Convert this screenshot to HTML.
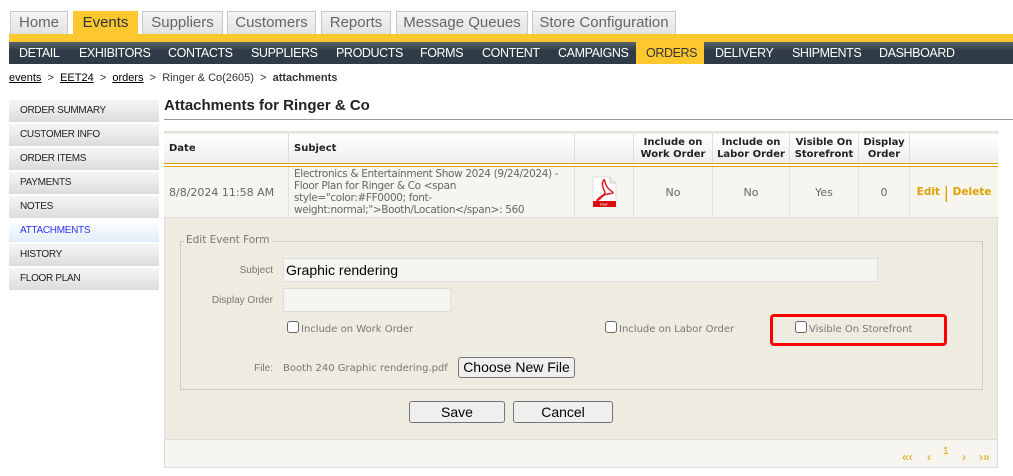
<!DOCTYPE html>
<html><head><meta charset="utf-8"><style>
*{box-sizing:border-box;margin:0;padding:0}
body{width:1013px;height:476px;overflow:hidden;background:#fff;font-family:"Liberation Sans",Arial,sans-serif;position:relative}
.abs{position:absolute}
.tab{position:absolute;top:11px;height:24px;border:1px solid #c8c8c8;border-bottom:none;background:linear-gradient(#f4f4f4,#e2e2e2);color:#666;font-size:15px;text-align:center;line-height:22px}
.tab.on{background:#fdc82f;color:#333;border-color:#fdc82f}
.ybar{left:9px;top:34px;width:1004px;height:8px;background:#fdc82f}
.nav{left:9px;top:42px;width:1004px;height:22px;background:linear-gradient(#5a636b,#2f3c47 40%,#2f3c47)}
.ni{position:absolute;top:42px;height:22px;line-height:22px;color:#fff;font-size:12.5px;letter-spacing:-0.4px;white-space:nowrap}
.nion{position:absolute;top:42px;left:636px;width:68px;height:22px;background:#fdc82f}
.bc{left:9px;top:72px;font-size:11px;color:#333}
.bc a{color:#000;text-decoration:underline}
.side{position:absolute;left:9px;width:150px;height:22px;background:linear-gradient(#f6f6f6,#dcdcdc);font-size:10px;letter-spacing:-0.3px;color:#222;line-height:22px;padding-left:11px}
.side.on{background:linear-gradient(#fff,#e0eefb);color:#33f}
.v{font-family:"DejaVu Sans",Verdana,sans-serif}
.hd{position:absolute;top:134px;height:29px;background:linear-gradient(#fff,#eee);border-right:1px solid #ddd;font-family:"DejaVu Sans",Verdana,sans-serif;font-size:10px;font-weight:bold;color:#222;text-align:center;line-height:12px;display:flex;align-items:center;justify-content:center}
.rc{position:absolute;top:167px;height:50px;background:#f6f5f0;border-right:1px solid #e2e2e2;font-family:"DejaVu Sans",Verdana,sans-serif;font-size:11px;color:#666;display:flex;align-items:center;justify-content:center}
.lbl{position:absolute;font-size:10px;color:#777;text-align:right}
.cb{display:inline-block;width:12px;height:12px;border:1px solid #666;border-radius:3px;background:#fff;vertical-align:-1px;margin-right:2px}
.btn{position:absolute;border:1px solid #767676;border-radius:3px;background:#efefef;font-size:14px;color:#000;text-align:center}
</style></head><body>
<div class="tab" style="left:10px;width:58px">Home</div>
<div class="tab on" style="left:73px;width:65px">Events</div>
<div class="tab" style="left:142px;width:81px">Suppliers</div>
<div class="tab" style="left:227px;width:89px">Customers</div>
<div class="tab" style="left:321px;width:70px">Reports</div>
<div class="tab" style="left:396px;width:132px">Message Queues</div>
<div class="tab" style="left:532px;width:144px">Store Configuration</div>
<div class="abs ybar"></div>
<div class="abs nav"></div>
<div class="nion"></div>
<div class="ni" style="left:19px">DETAIL</div>
<div class="ni" style="left:79px">EXHIBITORS</div>
<div class="ni" style="left:168px">CONTACTS</div>
<div class="ni" style="left:251px">SUPPLIERS</div>
<div class="ni" style="left:336px">PRODUCTS</div>
<div class="ni" style="left:420px">FORMS</div>
<div class="ni" style="left:482px">CONTENT</div>
<div class="ni" style="left:558px">CAMPAIGNS</div>
<div class="ni" style="left:646px;color:#333">ORDERS</div>
<div class="ni" style="left:715px">DELIVERY</div>
<div class="ni" style="left:792px">SHIPMENTS</div>
<div class="ni" style="left:879px">DASHBOARD</div>
<div class="abs bc"><a>events</a> &nbsp;&gt;&nbsp; <a>EET24</a> &nbsp;&gt;&nbsp; <a>orders</a> &nbsp;&gt;&nbsp; Ringer &amp; Co(2605) &nbsp;&gt;&nbsp; <b>attachments</b></div>
<div class="side" style="top:100px">ORDER SUMMARY</div>
<div class="side" style="top:124px">CUSTOMER INFO</div>
<div class="side" style="top:148px">ORDER ITEMS</div>
<div class="side" style="top:172px">PAYMENTS</div>
<div class="side" style="top:196px">NOTES</div>
<div class="side on" style="top:220px">ATTACHMENTS</div>
<div class="side" style="top:244px">HISTORY</div>
<div class="side" style="top:268px">FLOOR PLAN</div>
<div class="abs" style="left:164px;top:97px;font-size:15px;font-weight:bold;color:#222">Attachments for Ringer &amp; Co</div>
<div class="abs" style="left:164px;top:119px;width:849px;height:1px;background:#999"></div>
<div class="abs" style="left:164px;top:131px;width:834px;height:337px;background:#eeebe1;border:1px solid #ddd"></div>
<div class="hd" style="left:164px;width:125px;justify-content:flex-start;padding-left:5px">Date</div>
<div class="hd" style="left:289px;width:286px;justify-content:flex-start;padding-left:5px">Subject</div>
<div class="hd" style="left:575px;width:59px"></div>
<div class="hd" style="left:634px;width:79px">Include on<br>Work Order</div>
<div class="hd" style="left:713px;width:77px">Include on<br>Labor Order</div>
<div class="hd" style="left:790px;width:69px">Visible On<br>Storefront</div>
<div class="hd" style="left:859px;width:51px">Display<br>Order</div>
<div class="hd" style="left:910px;width:88px;border:none"></div>
<div class="abs" style="left:164px;top:163px;width:834px;height:4px;border-top:1px solid #e0a000;border-bottom:1px solid #e0a000;background:#fff"></div>
<div class="rc" style="left:164px;width:125px;justify-content:flex-start;padding-left:5px">8/8/2024 11:58 AM</div>
<div class="rc" style="left:289px;width:286px;justify-content:flex-start;padding-left:5px;line-height:12px;font-size:10.5px;letter-spacing:-0.35px;white-space:nowrap;overflow:hidden">Electronics &amp; Entertainment Show 2024 (9/24/2024) -<br>Floor Plan for Ringer &amp; Co &lt;span<br>style="color:#FF0000; font-<br>weight:normal;"&gt;Booth/Location&lt;/span&gt;: 560</div>
<div class="rc" style="left:575px;width:59px"><svg width="25" height="32" viewBox="0 0 25 32"><path d="M1 1h17l6 6v20H1z" fill="#fff" stroke="#ddd"/><path d="M18 1v6h6" fill="#eee" stroke="#ccc"/><path d="M11 5c-2 4 1 9 2 11s-7 6-8 8 3-1 6-4 9-2 10-3-5-3-7-8-1-7-3-4z" fill="none" stroke="#e02020" stroke-width="1.5"/><rect x="1" y="25" width="23" height="6" fill="#d81010"/><text x="8" y="30" font-size="4" fill="#fff" font-family="Liberation Sans">PDF</text></svg></div>
<div class="rc" style="left:634px;width:79px">No</div>
<div class="rc" style="left:713px;width:77px">No</div>
<div class="rc" style="left:790px;width:69px">Yes</div>
<div class="rc" style="left:859px;width:51px">0</div>
<div class="rc" style="left:910px;width:88px;border:none;color:#e0a000;font-weight:bold;font-size:10.5px">Edit&nbsp;<span style="font-size:16px;font-weight:normal">|</span>&nbsp;Delete</div>
<div class="abs" style="left:164px;top:217px;width:834px;height:1px;background:#ddd"></div>
<div class="abs" style="left:180px;top:241px;width:803px;height:149px;border:1px solid #ccc"></div>
<div class="abs v" style="left:184px;top:234px;font-size:10.5px;color:#777;background:#eeebe1;padding:0 2px">Edit Event Form</div>
<div class="lbl" style="left:180px;width:93px;top:265px">Subject</div>
<div class="abs" style="left:283px;top:258px;width:595px;height:24px;background:#f6f5f0;border:1px solid #ddd;font-size:14px;padding:3px 2px;color:#000">Graphic rendering</div>
<div class="lbl" style="left:180px;width:93px;top:295px">Display Order</div>
<div class="abs" style="left:283px;top:288px;width:168px;height:24px;background:#f6f5f0;border:1px solid #ddd"></div>
<div class="abs v" style="left:287px;top:321px;font-size:10px;color:#777"><span class="cb"></span>Include on Work Order</div>
<div class="abs v" style="left:605px;top:321px;font-size:10px;color:#777"><span class="cb"></span>Include on Labor Order</div>
<div class="abs" style="left:770px;top:314px;width:177px;height:32px;border:3px solid #f00;border-radius:4px"></div>
<div class="abs v" style="left:795px;top:321px;font-size:10px;color:#777"><span class="cb"></span>Visible On Storefront</div>
<div class="lbl" style="left:180px;width:93px;top:363px">File:</div>
<div class="abs v" style="left:283px;top:363px;font-size:10px;color:#777">Booth 240 Graphic rendering.pdf</div>
<div class="btn" style="left:458px;top:357px;width:117px;height:21px;line-height:19px">Choose New File</div>
<div class="btn" style="left:409px;top:401px;width:96px;height:22px;line-height:20px">Save</div>
<div class="btn" style="left:513px;top:401px;width:100px;height:22px;line-height:20px">Cancel</div>
<div class="abs" style="left:165px;top:439px;width:832px;height:28px;background:#f6f5f0;border-top:1px solid #ddd"></div>
<div class="abs" style="left:902px;top:450px;font-size:12px;color:#e0a000;white-space:nowrap">
<span class="abs" style="left:0">«‹</span><span class="abs" style="left:25px">‹</span><span class="abs" style="left:41px;top:-4px;font-size:10px">1</span><span class="abs" style="left:60px">›</span><span class="abs" style="left:77px">›»</span></div>
</body></html>
